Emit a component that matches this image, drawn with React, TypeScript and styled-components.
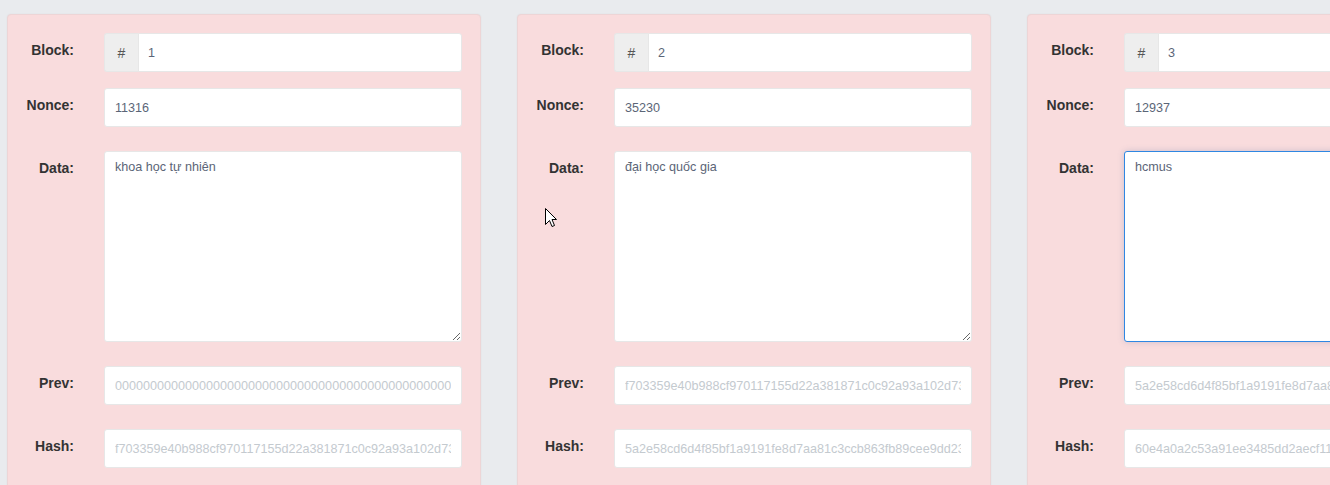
import React from "react";
import styled, { createGlobalStyle, css } from "styled-components";

const GlobalStyle = createGlobalStyle`
  html, body {
    margin: 0;
    padding: 0;
    background: #e9ebee;
    overflow: hidden;
    font-family: "Liberation Sans", Arial, sans-serif;
  }
`;

const Page = styled.div`
  position: relative;
  display: flex;
  gap: 36px;
  padding: 14px 0 0 7px;
  width: max-content;
  height: 540px;
  box-sizing: border-box;
`;

const Card = styled.div`
  width: 474px;
  box-sizing: border-box;
  flex-shrink: 0;
  background: #f9dcdd;
  border: 1px solid #edd5d6;
  border-radius: 4px;
  box-shadow: 0 0 2px rgba(0, 0, 0, 0.06);
  padding: 18px 17px 40px 0;
  display: flex;
  flex-direction: column;
`;

const Row = styled.div<{ $space: number }>`
  display: grid;
  grid-template-columns: 66px 358px;
  column-gap: 30px;
  margin-top: ${(p) => p.$space}px;
`;

const Label = styled.label`
  text-align: right;
  font-weight: bold;
  font-size: 14px;
  line-height: 20px;
  color: #333333;
  padding-top: 7px;
`;

const fieldBase = css`
  box-sizing: border-box;
  width: 100%;
  border: 1px solid #e7e7e7;
  border-radius: 3px;
  background: #ffffff;
  font-family: "Liberation Sans", Arial, sans-serif;
  font-size: 12.6px;
  color: #5b6577;
  padding: 0 10px;
  outline: none;
`;

const Input = styled.input<{ $muted?: boolean }>`
  ${fieldBase};
  height: 39px;
  color: ${(p) => (p.$muted ? "#c4cacf" : "#5b6577")};
`;

const Group = styled.div`
  display: flex;
  height: 39px;
`;

const Addon = styled.span`
  width: 34px;
  flex-shrink: 0;
  display: flex;
  align-items: center;
  justify-content: center;
  background: #eeeeee;
  border: 1px solid #e7e7e7;
  border-right: none;
  border-radius: 3px 0 0 3px;
  box-sizing: border-box;
  font-size: 14px;
  color: #555555;
`;

const GroupInput = styled(Input)`
  border-radius: 0 3px 3px 0;
  flex: 1;
  min-width: 0;
  padding-left: 9px;
`;

const TextArea = styled.textarea<{ $focused?: boolean }>`
  ${fieldBase};
  display: block;
  height: 191px;
  padding: 7px 10px 6px;
  line-height: 17px;
  resize: vertical;
  ${(p) =>
    p.$focused &&
    css`
      border-color: #2f87e2;
      box-shadow: 0 0 6px rgba(80, 110, 160, 0.25);
    `}
`;

const Cursor = styled.svg`
  position: absolute;
  left: 545px;
  top: 208px;
  pointer-events: none;
`;

type Block = {
  n: number;
  nonce: string;
  data: string;
  prev: string;
  hash: string;
  focused?: boolean;
};

const blocks: Block[] = [
  {
    n: 1,
    nonce: "11316",
    data: "khoa học tự nhiên",
    prev: "0000000000000000000000000000000000000000000000000000000000000000",
    hash: "f703359e40b988cf970117155d22a381871c0c92a93a102d73e5b8c21a4f09d6",
  },
  {
    n: 2,
    nonce: "35230",
    data: "đại học quốc gia",
    prev: "f703359e40b988cf970117155d22a381871c0c92a93a102d73e5b8c21a4f09d6",
    hash: "5a2e58cd6d4f85bf1a9191fe8d7aa81c3ccb863fb89cee9dd23a7e01b4c6f2d8",
  },
  {
    n: 3,
    nonce: "12937",
    data: "hcmus",
    prev: "5a2e58cd6d4f85bf1a9191fe8d7aa81c3ccb863fb89cee9dd23a7e01b4c6f2d8",
    hash: "60e4a0a2c53a91ee3485dd2aecf1187b2d09e4f3a6c51b8e72d0f94a3c8b1e05",
    focused: true,
  },
];

function BlockCard({ b }: { b: Block }) {
  return (
    <Card>
      <Row $space={0}>
        <Label>Block:</Label>
        <Group>
          <Addon>#</Addon>
          <GroupInput readOnly value={String(b.n)} />
        </Group>
      </Row>
      <Row $space={16}>
        <Label>Nonce:</Label>
        <Input readOnly value={b.nonce} />
      </Row>
      <Row $space={24}>
        <Label>Data:</Label>
        <TextArea readOnly value={b.data} $focused={b.focused} />
      </Row>
      <Row $space={24}>
        <Label>Prev:</Label>
        <Input readOnly $muted value={b.prev} />
      </Row>
      <Row $space={24}>
        <Label>Hash:</Label>
        <Input readOnly $muted value={b.hash} />
      </Row>
    </Card>
  );
}

export default function App() {
  return (
    <>
      <GlobalStyle />
      <Page>
        {blocks.map((b) => (
          <BlockCard key={b.n} b={b} />
        ))}
        <Cursor width="12" height="20" viewBox="0 0 12 20">
          <path
            d="M0.5 0.5 L0.5 16.5 L4.5 12.5 L7 18.5 L9.5 17.5 L7 11.5 L11.5 11.5 Z"
            fill="#ffffff"
            stroke="#000000"
            strokeWidth="1"
          />
        </Cursor>
      </Page>
    </>
  );
}
